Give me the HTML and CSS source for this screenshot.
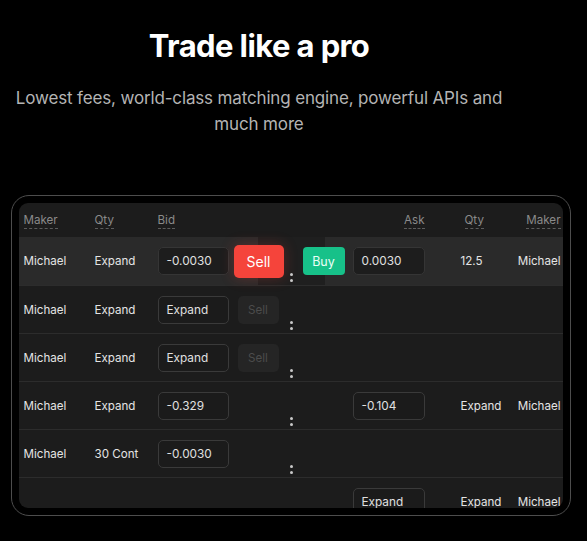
FILE: index.html
```html
<!DOCTYPE html>
<html lang="en">
<head>
<meta charset="utf-8">
<title>Trade like a pro</title>
<link rel="stylesheet" href="styles.css">
</head>
<body>
<main class="hero">
  <div class="intro">
    <h1 class="title">Trade like a pro</h1>
    <p class="subtitle">Lowest fees, world-class matching engine, powerful APIs and much more</p>
  </div>
  <div class="frame">
    <div class="panel">
      <div class="row head">
        <span class="th">Maker</span>
        <span class="th">Qty</span>
        <span class="th">Bid</span>
        <span></span><span></span><span></span>
        <span class="th ask-h">Ask</span>
        <span class="th qty-h">Qty</span>
        <span class="th maker-h">Maker</span>
      </div>

      <div class="row active">
        <span class="cell">Michael</span>
        <span class="cell">Expand</span>
        <span class="input">-0.0030</span>
        <span class="btn sell">Sell</span>
        <span class="dots"><i></i><i></i></span>
        <span class="btn buy">Buy</span>
        <span class="input ask">0.0030</span>
        <span class="cell qty-r">12.5</span>
        <span class="cell maker-r">Michael</span>
      </div>

      <div class="row">
        <span class="cell">Michael</span>
        <span class="cell">Expand</span>
        <span class="input">Expand</span>
        <span class="btn sell-off">Sell</span>
        <span class="dots"><i></i><i></i></span>
        <span></span><span></span><span></span><span></span>
      </div>

      <div class="row">
        <span class="cell">Michael</span>
        <span class="cell">Expand</span>
        <span class="input">Expand</span>
        <span class="btn sell-off">Sell</span>
        <span class="dots"><i></i><i></i></span>
        <span></span><span></span><span></span><span></span>
      </div>

      <div class="row">
        <span class="cell">Michael</span>
        <span class="cell">Expand</span>
        <span class="input">-0.329</span>
        <span></span>
        <span class="dots"><i></i><i></i></span>
        <span></span>
        <span class="input ask">-0.104</span>
        <span class="cell qty-r">Expand</span>
        <span class="cell maker-r">Michael</span>
      </div>

      <div class="row">
        <span class="cell">Michael</span>
        <span class="cell">30 Cont</span>
        <span class="input">-0.0030</span>
        <span></span>
        <span class="dots"><i></i><i></i></span>
        <span></span><span></span><span></span><span></span>
      </div>

      <div class="row">
        <span></span><span></span><span></span><span></span>
        <span class="dots"><i></i><i></i></span>
        <span></span>
        <span class="input ask">Expand</span>
        <span class="cell qty-r">Expand</span>
        <span class="cell maker-r">Michael</span>
      </div>
    </div>
  </div>
</main>
</body>
</html>
```

FILE: styles.css
```css
* { box-sizing: border-box; }

html, body {
  margin: 0;
  padding: 0;
  background: #000;
}

.hero {
  display: flex;
  flex-direction: column;
  padding-top: 27px;
  font-family: Inter, "Noto Sans", sans-serif;
}

.intro {
  width: 518px;
  display: flex;
  flex-direction: column;
  align-items: center;
}

.title {
  margin: 0;
  font-size: 31px;
  line-height: 38px;
  font-weight: 700;
  letter-spacing: -0.6px;
  color: #fff;
}

.subtitle {
  margin: 20px 0 0;
  text-align: center;
  font-size: 17px;
  line-height: 26px;
  color: #b4b4b4;
  letter-spacing: -0.15px;
}

.frame {
  margin-top: 58px;
  margin-left: 11px;
  width: 560px;
  height: 321px;
  border: 1.5px solid #4d4d4d;
  border-radius: 18px;
  padding: 7px 7.5px 7px 6.5px;
}

.panel {
  height: 100%;
  background: #1c1c1c;
  border-radius: 9px;
  overflow: hidden;
  font-family: Inter, "Noto Sans", sans-serif;
  font-size: 11.6px;
  color: #e4e4e4;
}

.row {
  display: grid;
  grid-template-columns: 71px 63px 71px 55px 19px 42px 80px 1fr auto;
  align-items: center;
  height: 48px;
  padding: 0 2px 0 5px;
  border-top: 1px solid #2c2c2c;
}

.row.head {
  height: 34px;
  border-top: none;
  padding-top: 1px;
}

.row.active {
  border-top: none;
  background: linear-gradient(90deg, #2a2a2a 239px, #1f1f1f 239px, #1f1f1f 306px, #2a2a2a 306px);
}

.th {
  justify-self: start;
  color: #8a8a8a;
  line-height: 15px;
  border-bottom: 1px dashed #5c5c5c;
}

.ask-h { justify-self: end; }
.qty-h { margin-left: 40px; }
.maker-h { justify-self: end; }

.cell { white-space: nowrap; }
.qty-r { padding-left: 36px; }
.maker-r { justify-self: end; }

.input {
  width: 71px;
  height: 28px;
  display: flex;
  align-items: center;
  padding-left: 8px;
  border: 1px solid #3a3a3a;
  border-radius: 5px;
  background: #1b1b1b;
  color: #e0e0e0;
  font-size: 11.8px;
}

.row.active .input {
  background: #1d1d1d;
  border-color: #353535;
}

.input.ask {
  justify-self: end;
  width: 72px;
}

.btn {
  display: flex;
  align-items: center;
  justify-content: center;
  border-radius: 5px;
}

.sell {
  justify-self: end;
  width: 50px;
  height: 33px;
  background: #f5443b;
  color: #fff;
  font-size: 14px;
  box-shadow: 0 0 14px rgba(245, 68, 59, 0.25);
}

.sell-off {
  justify-self: end;
  margin-right: 5px;
  width: 41px;
  height: 28px;
  background: #252525;
  color: #4c4c4c;
  font-size: 11.6px;
}

.buy {
  width: 42px;
  height: 28px;
  background: #17c189;
  color: #e9fff6;
  font-size: 12.5px;
  border-radius: 4px;
}

.dots {
  align-self: end;
  justify-self: start;
  margin-left: 6px;
  padding-bottom: 3px;
  display: flex;
  flex-direction: column;
  gap: 3px;
}

.dots i {
  display: block;
  width: 3px;
  height: 3px;
  border-radius: 50%;
  background: #c8c8c8;
}
```
